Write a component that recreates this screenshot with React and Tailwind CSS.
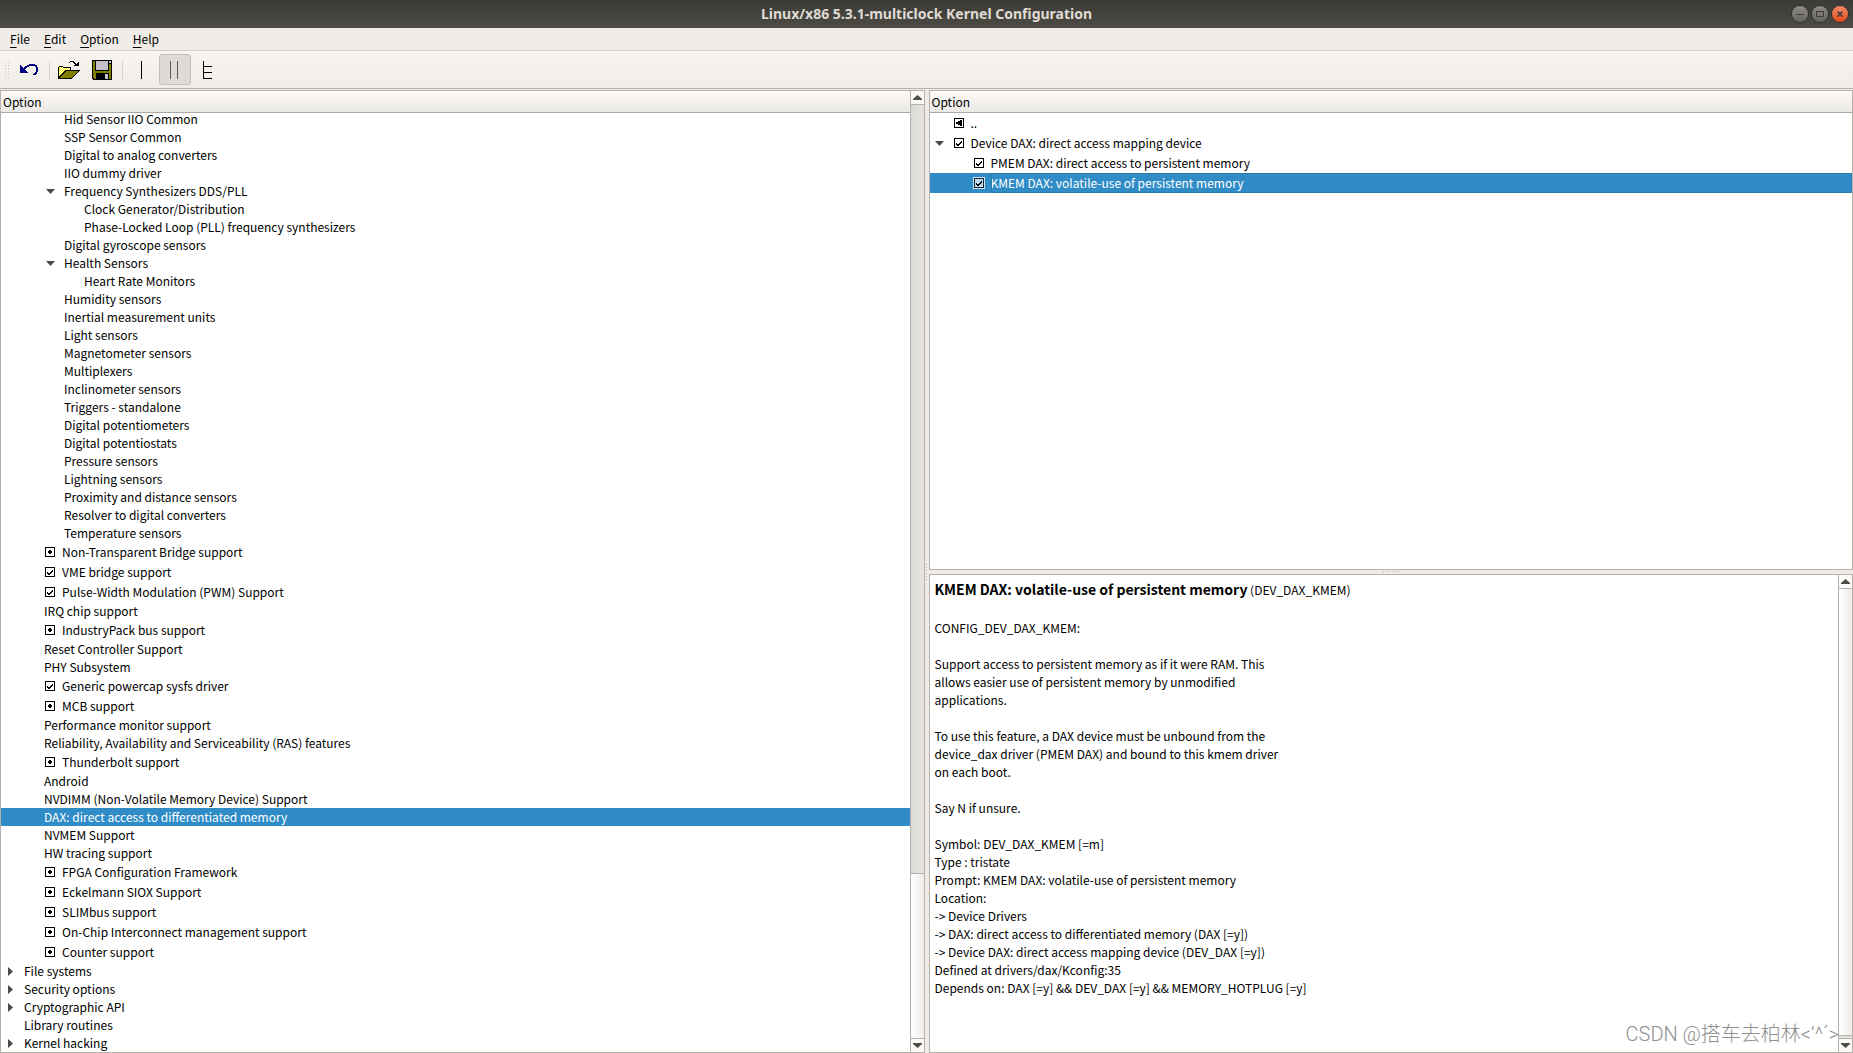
import { useState } from 'react';
import clsx from 'clsx';

/* ─── data ──────────────────────────────────────────────────────────────── */
const MENUS = ['File', 'Edit', 'Option', 'Help'];

const CONFIG_ROWS = [
  { depth: 2, label: 'Hid Sensor IIO Common' },
  { depth: 2, label: 'SSP Sensor Common' },
  { depth: 2, label: 'Digital to analog converters' },
  { depth: 2, label: 'IIO dummy driver' },
  { depth: 2, label: 'Frequency Synthesizers DDS/PLL', arrow: 'open' },
  { depth: 3, label: 'Clock Generator/Distribution' },
  { depth: 3, label: 'Phase-Locked Loop (PLL) frequency synthesizers' },
  { depth: 2, label: 'Digital gyroscope sensors' },
  { depth: 2, label: 'Health Sensors', arrow: 'open' },
  { depth: 3, label: 'Heart Rate Monitors' },
  { depth: 2, label: 'Humidity sensors' },
  { depth: 2, label: 'Inertial measurement units' },
  { depth: 2, label: 'Light sensors' },
  { depth: 2, label: 'Magnetometer sensors' },
  { depth: 2, label: 'Multiplexers' },
  { depth: 2, label: 'Inclinometer sensors' },
  { depth: 2, label: 'Triggers - standalone' },
  { depth: 2, label: 'Digital potentiometers' },
  { depth: 2, label: 'Digital potentiostats' },
  { depth: 2, label: 'Pressure sensors' },
  { depth: 2, label: 'Lightning sensors' },
  { depth: 2, label: 'Proximity and distance sensors' },
  { depth: 2, label: 'Resolver to digital converters' },
  { depth: 2, label: 'Temperature sensors' },
  { depth: 1, label: 'Non-Transparent Bridge support', state: 'module' },
  { depth: 1, label: 'VME bridge support', state: 'yes' },
  { depth: 1, label: 'Pulse-Width Modulation (PWM) Support', state: 'yes' },
  { depth: 1, label: 'IRQ chip support' },
  { depth: 1, label: 'IndustryPack bus support', state: 'module' },
  { depth: 1, label: 'Reset Controller Support' },
  { depth: 1, label: 'PHY Subsystem' },
  { depth: 1, label: 'Generic powercap sysfs driver', state: 'yes' },
  { depth: 1, label: 'MCB support', state: 'module' },
  { depth: 1, label: 'Performance monitor support' },
  { depth: 1, label: 'Reliability, Availability and Serviceability (RAS) features' },
  { depth: 1, label: 'Thunderbolt support', state: 'module' },
  { depth: 1, label: 'Android' },
  { depth: 1, label: 'NVDIMM (Non-Volatile Memory Device) Support' },
  { depth: 1, label: 'DAX: direct access to differentiated memory' },
  { depth: 1, label: 'NVMEM Support' },
  { depth: 1, label: 'HW tracing support' },
  { depth: 1, label: 'FPGA Configuration Framework', state: 'module' },
  { depth: 1, label: 'Eckelmann SIOX Support', state: 'module' },
  { depth: 1, label: 'SLIMbus support', state: 'module' },
  { depth: 1, label: 'On-Chip Interconnect management support', state: 'module' },
  { depth: 1, label: 'Counter support', state: 'module' },
  { depth: 0, label: 'File systems', arrow: 'closed' },
  { depth: 0, label: 'Security options', arrow: 'closed' },
  { depth: 0, label: 'Cryptographic API', arrow: 'closed' },
  { depth: 0, label: 'Library routines' },
  { depth: 0, label: 'Kernel hacking', arrow: 'closed' },
];

const MENU_ROWS = [
  { depth: 0, label: '..', state: 'back' },
  { depth: 0, label: 'Device DAX: direct access mapping device', state: 'yes', arrow: 'open' },
  { depth: 1, label: 'PMEM DAX: direct access to persistent memory', state: 'yes' },
  { depth: 1, label: 'KMEM DAX: volatile-use of persistent memory', state: 'yes' },
];

const HELP_TEXT = `
CONFIG_DEV_DAX_KMEM:

Support access to persistent memory as if it were RAM. This
allows easier use of persistent memory by unmodified
applications.

To use this feature, a DAX device must be unbound from the
device_dax driver (PMEM DAX) and bound to this kmem driver
on each boot.

Say N if unsure.

Symbol: DEV_DAX_KMEM [=m]
Type : tristate
Prompt: KMEM DAX: volatile-use of persistent memory
Location:
-> Device Drivers
-> DAX: direct access to differentiated memory (DAX [=y])
-> Device DAX: direct access mapping device (DEV_DAX [=y])
Defined at drivers/dax/Kconfig:35
Depends on: DAX [=y] && DEV_DAX [=y] && MEMORY_HOTPLUG [=y]`;

const INDENT = ['pl-[2px]', 'pl-[22px]', 'pl-[42px]', 'pl-[62px]'];

/* ─── toolbar icons ─────────────────────────────────────────────────────── */
function UndoIcon() {
  return (
    <svg width="18" height="11" viewBox="0 0 18 11" shapeRendering="crispEdges">
      <path
        fill="#000083"
        d="M9 0h6v1H9zM0 1h1v1H0zM7 1h10v1H7zM0 2h2v1H0zM5 2h4v1H5zM15 2h2v1h-2zM0 3h3v1H0zM4 3h3v1H4zM16 3h2v5h-2zM0 4h6v1H0zM0 5h5v1H0zM0 6h6v1H0zM0 7h7v1H0zM0 8h8v1H0zM15 8h2v1h-2zM14 9h3v1h-3zM13 10h3v1h-3z"
      />
    </svg>
  );
}

function OpenIcon() {
  return (
    <svg width="22" height="18" viewBox="0 0 22 18" shapeRendering="crispEdges">
      <defs>
        <pattern id="dither" width="2" height="2" patternUnits="userSpaceOnUse">
          <rect width="2" height="2" fill="#ffff00" />
          <rect width="1" height="1" fill="#ffffff" />
          <rect x="1" y="1" width="1" height="1" fill="#ffffff" />
        </pattern>
      </defs>
      <path d="M0 6h1V5h4v1h8v5H7v1H6v1H5v1H4v1H3v1H2v1H0z" fill="#000" />
      <path d="M1 6h4v1h7v3H6v1H5v1H4v1H3v1H2v1H1z" fill="url(#dither)" />
      <path d="M7 9h15v1h-1v1h-1v1h-1v1h-1v1h-1v1h-1v1h-1v1h-1v1H0v-1h1v-1h1v-1h1v-1h1v-1h1v-1h1v-1h1z" fill="#000" />
      <path d="M8 10h12v1h-1v1h-1v1h-1v1h-1v1h-1v1h-1v1H2v-1h1v-1h1v-1h1v-1h1v-1h1v-1h1z" fill="#7f7f00" />
      <path d="M11 1h1V0h4v1h1v1h1v1h1V2h1V1h1v4h-5V4h1V3h-1V2h-1V1h-3v1h-1z" fill="#000" />
    </svg>
  );
}

function SaveIcon() {
  return (
    <svg width="20" height="20" viewBox="0 0 20 20" shapeRendering="crispEdges">
      <path d="M0 0h20v20H1v-1H0z" fill="#000" />
      <path d="M1 1h2v10h14V4h2v15h-2v-6H4v6H2v-1H1z" fill="#7f7f00" />
      <rect x="3" y="11" width="14" height="2" fill="#7f7f00" />
      <rect x="4" y="1" width="12" height="9" fill="#c3c0c6" />
      <rect x="17" y="1" width="2" height="2" fill="#c3c0c6" />
      <rect x="13" y="14" width="3" height="5" fill="#c3c0c6" />
    </svg>
  );
}

function SingleIcon() {
  return (
    <svg width="18" height="18" viewBox="0 0 18 18" shapeRendering="crispEdges">
      <rect x="8" width="1" height="18" fill="#000" />
    </svg>
  );
}

function SplitIcon() {
  return (
    <svg width="18" height="18" viewBox="0 0 18 18" shapeRendering="crispEdges">
      <path d="M4 0h1v18H4zM11 0h1v18h-1z" fill="#5a5856" />
    </svg>
  );
}

function FullIcon() {
  return (
    <svg width="18" height="18" viewBox="0 0 18 18" shapeRendering="crispEdges">
      <path d="M4 0h1v5h8v1H5v5h8v1H5v5h8v1H4z" fill="#000" />
    </svg>
  );
}

/* ─── title bar ─────────────────────────────────────────────────────────── */
function WindowButton({ label, close, children }) {
  return (
    <button
      type="button"
      aria-label={label}
      className={clsx(
        'flex size-4 items-center justify-center rounded-full shadow-[0_0_0_1px_#33322e]',
        close ? 'bg-linear-to-b from-[#f68a64] to-[#dd4814]' : 'bg-linear-to-b from-[#8d8b84] to-[#66645e]',
      )}
    >
      <svg width="8" height="8" viewBox="0 0 8 8" fill="none" stroke="#3c3b37">
        {children}
      </svg>
    </button>
  );
}

function TitleBar() {
  return (
    <header className="relative flex h-7 shrink-0 items-center justify-center bg-linear-to-b from-[#3c3b37] to-[#4b4a44]">
      <h1 className="font-['Noto_Sans',sans-serif] text-sm font-bold text-[#dfdbd2]">
        Linux/x86 5.3.1-multiclock Kernel Configuration
      </h1>
      <div className="absolute right-[5px] flex gap-1">
        <WindowButton label="Minimize"><path d="M0 4.5h8" /></WindowButton>
        <WindowButton label="Maximize"><path d="M.5 1.5h7v5h-7z" /></WindowButton>
        <WindowButton label="Close" close><path d="M1.5 1.5l5 5M6.5 1.5l-5 5" strokeWidth="1.5" /></WindowButton>
      </div>
    </header>
  );
}

/* ─── menu bar and toolbar ──────────────────────────────────────────────── */
function MenuBar() {
  return (
    <nav className="flex h-[23px] shrink-0 items-center border-b border-[#d3cfca] px-[3px]">
      {MENUS.map((name) => (
        <button key={name} type="button" className="px-[7px] leading-[18px]">
          <span className="underline underline-offset-[3px]">{name[0]}</span>
          {name.slice(1)}
        </button>
      ))}
    </nav>
  );
}

function ToolButton({ label, pressed, children }) {
  return (
    <button
      type="button"
      title={label}
      aria-label={label}
      aria-pressed={pressed}
      className={clsx(
        'flex h-[31px] w-8 items-center justify-center rounded-[3px] border',
        pressed ? 'border-[#c3bfba] bg-[#dedad6]' : 'border-transparent',
      )}
    >
      {children}
    </button>
  );
}

function Separator() {
  return (
    <div className="flex h-[18px] w-[6px] justify-center">
      <div className="w-px bg-[#d6d2cd]" />
    </div>
  );
}

function ToolBar() {
  return (
    <div className="flex h-[38px] shrink-0 items-center gap-px border-b border-[#b5b1ac] bg-linear-to-b from-[#f9f6f2] to-[#efebe6] pl-[5px]">
      <svg width="7" height="18" viewBox="0 0 7 18" fill="#c9c5c0" shapeRendering="crispEdges">
        {[1, 4, 7, 10, 13, 16].map((y) => (
          <g key={y}>
            <rect x="0" y={y} width="1" height="1" />
            <rect x="3" y={y} width="1" height="1" />
          </g>
        ))}
      </svg>
      <ToolButton label="Back"><UndoIcon /></ToolButton>
      <Separator />
      <ToolButton label="Load"><OpenIcon /></ToolButton>
      <ToolButton label="Save"><SaveIcon /></ToolButton>
      <Separator />
      <ToolButton label="Single View"><SingleIcon /></ToolButton>
      <ToolButton label="Split View" pressed><SplitIcon /></ToolButton>
      <ToolButton label="Full View"><FullIcon /></ToolButton>
    </div>
  );
}

/* ─── tree ──────────────────────────────────────────────────────────────── */
function Expander({ arrow }) {
  return (
    <span className="flex w-[21px] shrink-0 items-center pl-[3px]">
      {arrow === 'open' && (
        <svg width="9" height="5" viewBox="0 0 9 5" fill="#4a4a4a"><path d="M0 0h9L4.5 5z" /></svg>
      )}
      {arrow === 'closed' && (
        <svg width="9" height="9" viewBox="0 0 9 9" fill="#4a4a4a"><path d="M2 0l5 4.5L2 9z" /></svg>
      )}
    </span>
  );
}

function Tristate({ state, label, selected }) {
  return (
    <span className={clsx('mr-[6px] grid size-3 shrink-0 place-items-center', selected && 'bg-[#cfe5f4]')}>
      <input
        type="checkbox"
        aria-label={label}
        defaultChecked={state === 'yes'}
        className={clsx(
          'col-start-1 row-start-1 size-[10px] appearance-none border',
          selected ? 'border-[#12222e] bg-[#bcd9ee]' : 'border-black bg-white',
        )}
      />
      <svg
        width="10"
        height="10"
        viewBox="0 0 10 10"
        shapeRendering="crispEdges"
        className="pointer-events-none col-start-1 row-start-1"
      >
        {state === 'yes' && <path d="M7 3h1v2H7v1H6v1H5v1H3V7H2V5h1v1h2V5h1V4h1z" />}
        {state === 'module' && <path d="M4 3h2v1h1v2H6v1H4V6H3V4h1z" />}
        {state === 'back' && <path d="M6 2h2v6H6V7H4V6H2V4h2V3h2z" />}
      </svg>
    </span>
  );
}

function TreeRow({ row, tall, selected, focused, onSelect }) {
  return (
    <div
      role="treeitem"
      aria-selected={selected}
      onClick={() => onSelect(row.label)}
      className={clsx(
        'flex shrink-0',
        INDENT[row.depth],
        tall ? 'h-5' : 'h-[18px]',
        selected && 'bg-[#308cc6] text-white',
      )}
    >
      <Expander arrow={row.arrow} />
      {row.state && (
        <span className="flex items-center">
          <Tristate state={row.state} label={row.label} selected={selected} />
        </span>
      )}
      <span
        className={clsx(
          'flex grow items-center leading-[18px] whitespace-nowrap',
          focused && 'outline outline-[#2a7cb0] -outline-offset-1',
        )}
      >
        {row.label}
      </span>
    </div>
  );
}

function TreeHeader() {
  return (
    <div className="flex h-[22px] shrink-0 items-center border-b border-[#aca8a3] bg-linear-to-b from-[#fdfaf7] to-[#ebe9e6] pl-[2px]">
      Option
    </div>
  );
}

/* ─── scroll bar ────────────────────────────────────────────────────────── */
function ScrollBar({ above, handle, below }) {
  return (
    <div className="flex w-[14px] shrink-0 flex-col border-l border-[#b5b1ac]">
      <button type="button" aria-label="Scroll up" className="flex h-[14px] shrink-0 items-center justify-center border-b border-[#b5b1ac] bg-[#fbfaf8]">
        <svg width="9" height="5" viewBox="0 0 9 5" fill="#4f4d4a"><path d="M4.5 0L9 4v1H0V4z" /></svg>
      </button>
      <div className={clsx('bg-linear-to-r from-[#dcdad6] to-[#e6e4e1]', above)} />
      <div className={clsx('bg-linear-to-r from-white to-[#efedea]', handle)} />
      <div className={clsx('bg-[#e3e1dd]', below)} />
      <button type="button" aria-label="Scroll down" className="flex h-[14px] shrink-0 items-center justify-center border-t border-[#b5b1ac] bg-[#fbfaf8]">
        <svg width="9" height="5" viewBox="0 0 9 5" fill="#4f4d4a"><path d="M0 0h9v1L4.5 5L0 1z" /></svg>
      </button>
    </div>
  );
}

/* ─── panes ─────────────────────────────────────────────────────────────── */
function ConfigPane() {
  const [current, setCurrent] = useState('DAX: direct access to differentiated memory');

  return (
    <section className="flex min-h-0 min-w-0 border border-[#b5b1ac] bg-white">
      <div className="flex min-w-0 grow flex-col">
        <TreeHeader />
        {/* the list rests on its last row */}
        <div role="tree" className="flex min-h-0 grow flex-col justify-end overflow-hidden">
          {CONFIG_ROWS.map((row) => (
            <TreeRow
              key={row.label}
              row={row}
              tall={Boolean(row.state)}
              selected={row.label === current}
              onSelect={setCurrent}
            />
          ))}
        </div>
      </div>
      <ScrollBar above="grow-[768]" handle="grow-[164] border-t border-[#b5b1ac]" below="h-0" />
    </section>
  );
}

function MenuPane() {
  const [current, setCurrent] = useState('KMEM DAX: volatile-use of persistent memory');

  return (
    <section className="flex min-h-0 flex-1 flex-col border border-[#b5b1ac] bg-white">
      <TreeHeader />
      <div role="tree" className="flex min-h-0 grow flex-col overflow-hidden">
        {MENU_ROWS.map((row) => (
          <TreeRow
            key={row.label}
            row={row}
            tall
            selected={row.label === current}
            focused={row.label === current}
            onSelect={setCurrent}
          />
        ))}
      </div>
    </section>
  );
}

function HelpPane() {
  return (
    <section className="flex min-h-0 flex-1 border border-[#b5b1ac] bg-white">
      <div className="min-w-0 grow overflow-hidden px-[5px] py-1">
        <h2 className="leading-[22px]">
          <b className="text-sm leading-none">KMEM DAX: volatile-use of persistent memory</b> (DEV_DAX_KMEM)
        </h2>
        <p className="leading-[18px] whitespace-pre-wrap">{HELP_TEXT}</p>
      </div>
      <ScrollBar above="h-0" handle="grow border-b border-[#b5b1ac]" below="h-[2px]" />
    </section>
  );
}

function Grip({ vertical }) {
  return (
    <div
      className={clsx(
        'flex shrink-0 items-center justify-center gap-[2px]',
        vertical ? 'flex-col' : 'h-1',
      )}
    >
      {[0, 1, 2, 3, 4, 5].map((i) => (
        <span key={i} className="size-px bg-[#b9b5b0]" />
      ))}
    </div>
  );
}

export default function App() {
  return (
    <div className="relative flex h-screen flex-col overflow-hidden bg-[#efebe7] font-['Noto_Sans_CJK_SC',sans-serif] text-xs text-black">
      <TitleBar />
      <MenuBar />
      <ToolBar />
      <main className="mt-px grid min-h-0 grow grid-cols-[minmax(0,1fr)_4px_minmax(0,1fr)] grid-rows-[minmax(0,1fr)]">
        <ConfigPane />
        <Grip vertical />
        <div className="flex min-h-0 min-w-0 flex-col">
          <MenuPane />
          <Grip />
          <HelpPane />
        </div>
      </main>
      <div className="pointer-events-none absolute right-[14px] bottom-1 font-[Roboto,'Noto_Sans_CJK_SC',sans-serif] text-xl leading-[30px] font-light text-[#8f8f8f]">
        CSDN @搭车去柏林&lt;‘^´&gt;
      </div>
    </div>
  );
}
